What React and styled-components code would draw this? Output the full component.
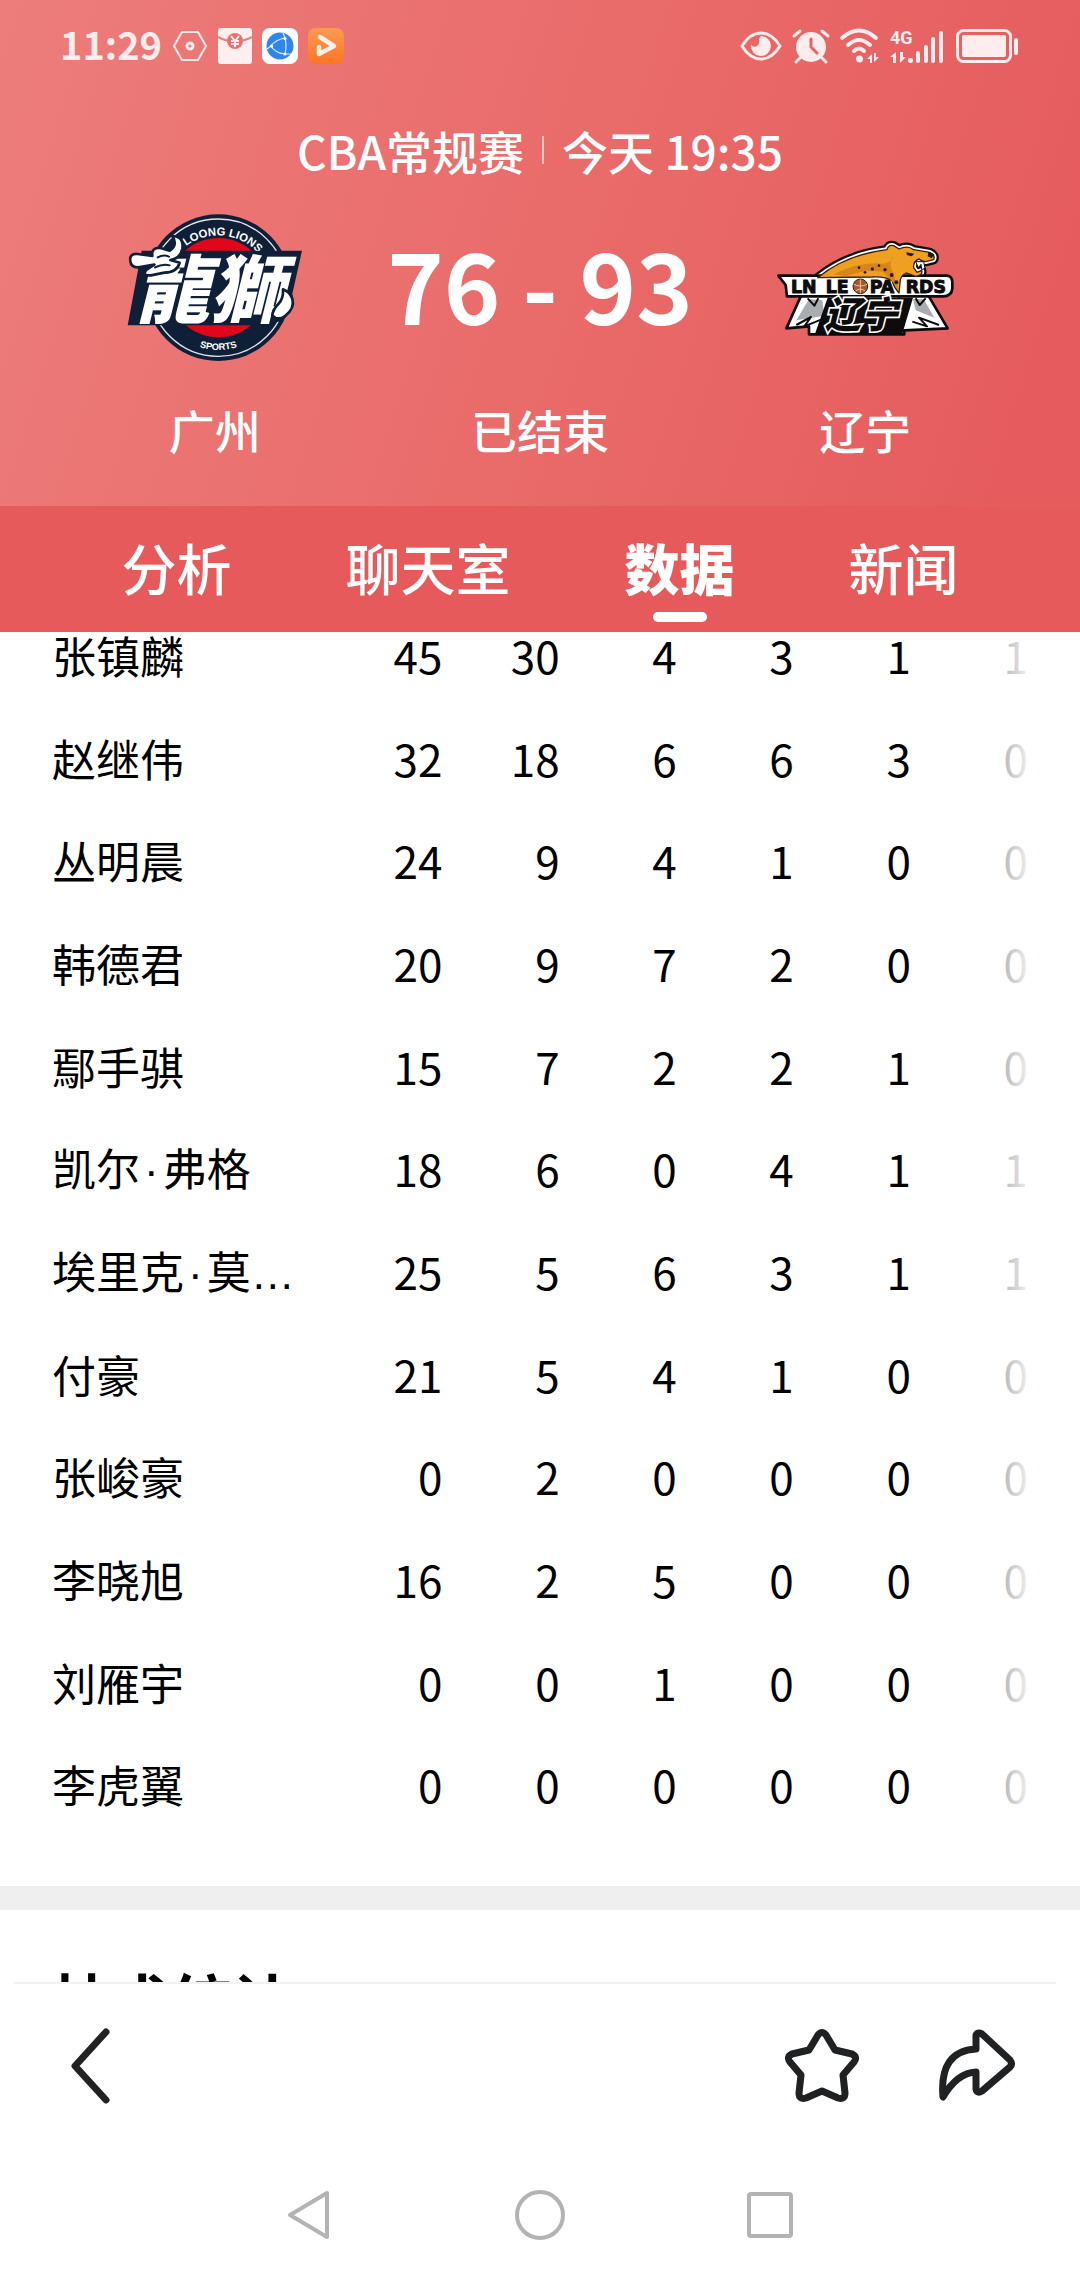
import React from "react";
import styled, { createGlobalStyle } from "styled-components";

const GlobalStyle = createGlobalStyle`
  * {
    box-sizing: border-box;
  }

  body {
    margin: 0;
    background: #fff;
    color: #000;
    font-family: "Noto Sans CJK SC", sans-serif;
  }

  button {
    border: 0;
    padding: 0;
    background: none;
    color: inherit;
    font: inherit;
    cursor: pointer;
  }

  svg {
    display: block;
    flex: none;
    overflow: visible;
  }
`;

const Page = styled.div`
  height: 100vh;
  display: flex;
  flex-direction: column;
`;

const Hero = styled.header`
  padding-bottom: 45px;
  color: #fff;
  background: linear-gradient(108deg, #ec7d7b 0%, #e96b6a 52%, #e65b5d 96%);
`;

const StatusBar = styled.div`
  display: flex;
  align-items: center;
  justify-content: space-between;
  height: 92px;
  padding: 0 60px;
  color: #ffecec;
`;

const StatusGroup = styled.div`
  display: flex;
  align-items: center;
  gap: 10px;
`;

const Clock = styled.time`
  font-size: 38px;
  font-weight: 700;
  line-height: 86px;
  height: 90px;
`;

const MatchTitle = styled.h1`
  display: flex;
  align-items: center;
  justify-content: center;
  gap: 18px;
  margin: 26px 0 30px;
  font-size: 46px;
  font-weight: 500;
  line-height: 64px;
`;

const Divider = styled.span`
  width: 2px;
  height: 28px;
  background: rgba(255, 255, 255, 0.6);
`;

const Scoreboard = styled.div`
  display: grid;
  grid-template-columns: repeat(3, 1fr);
  padding: 0 52px;
`;

const Side = styled.div`
  display: flex;
  flex-direction: column;
  align-items: center;
  gap: 33px;
  font-size: 46px;
  font-weight: 500;
  line-height: 64px;
`;

const Emblem = styled.div`
  display: flex;
  align-items: center;
  height: 152px;
`;

const Score = styled.div`
  height: 152px;
  font-size: 96px;
  font-weight: 700;
  line-height: 144px;
  white-space: nowrap;
`;

const Tabs = styled.nav`
  display: flex;
  justify-content: center;
  gap: 114px;
  background: #e65a5c;
  color: #fff;
`;

const Tab = styled.button`
  display: flex;
  flex-direction: column;
  align-items: center;
  height: 126px;
  padding-top: 20px;
  font-size: 55px;
  line-height: 80px;
  font-weight: ${(props) => (props.$active ? 900 : 500)};

  &::after {
    content: "";
    width: 54px;
    height: 10px;
    margin-top: 6px;
    border-radius: 5px;
    background: ${(props) => (props.$active ? "#fff" : "transparent")};
  }
`;

const Scroller = styled.main`
  position: relative;
  flex: 1;
  min-height: 0;
  overflow: hidden;
`;

const StatsWrap = styled.section`
  position: relative;
  padding: 0 52px 51px;
  margin-top: -29px;
`;

const EdgeFade = styled.div`
  position: absolute;
  top: 0;
  right: 0;
  bottom: 0;
  width: 160px;
  background: linear-gradient(90deg, rgba(255, 255, 255, 0), #fff 72%);
  pointer-events: none;
`;

const StatsTable = styled.table`
  width: 100%;
  table-layout: fixed;
  border-collapse: collapse;
  font-size: 44px;
  line-height: 48px;
`;

const Row = styled.tr`
  height: 103px;

  &:nth-child(3n) {
    height: 102px;
  }
`;

const Player = styled.th`
  padding: 0;
  font-weight: 400;
  text-align: left;
  white-space: nowrap;
`;

/* latin glyphs for the name dot and the ellipsis, the CJK ones are full width */
const Punct = styled.span`
  padding: 0 ${(props) => (props.$spaced ? "4px" : 0)};
  font-family: "Liberation Sans", sans-serif;
  line-height: 1;
`;

const Stat = styled.td`
  width: 12%;
  padding: 0;
  text-align: right;
`;

const TechSection = styled.section`
  padding: 45px 52px;
  border-top: 24px solid #efefef;
`;

const SectionTitle = styled.h2`
  margin: 0;
  font-size: 60px;
  font-weight: 700;
  line-height: 88px;
`;

const ActionBar = styled.footer`
  display: flex;
  align-items: center;
  gap: 70px;
  margin: 0 24px 0 14px;
  padding: 40px 38px 41px 34px;
  border-top: 2px solid #f2f2f2;
`;

const IconButton = styled.button`
  display: flex;
  align-items: center;
  justify-content: center;
  width: 84px;
  height: 84px;
  margin-right: ${(props) => (props.$push ? "auto" : 0)};
`;

const SystemNav = styled.nav`
  display: flex;
  justify-content: center;
  height: 131px;
`;

const NavButton = styled.button`
  display: flex;
  align-items: center;
  justify-content: center;
  width: 230px;
`;

const players = [
  ["张镇麟", 45, 30, 4, 3, 1, 1],
  ["赵继伟", 32, 18, 6, 6, 3, 0],
  ["丛明晨", 24, 9, 4, 1, 0, 0],
  ["韩德君", 20, 9, 7, 2, 0, 0],
  ["鄢手骐", 15, 7, 2, 2, 1, 0],
  ["凯尔·弗格", 18, 6, 0, 4, 1, 1],
  ["埃里克·莫…", 25, 5, 6, 3, 1, 1],
  ["付豪", 21, 5, 4, 1, 0, 0],
  ["张峻豪", 0, 2, 0, 0, 0, 0],
  ["李晓旭", 16, 2, 5, 0, 0, 0],
  ["刘雁宇", 0, 0, 1, 0, 0, 0],
  ["李虎翼", 0, 0, 0, 0, 0, 0],
];

const tabs = ["分析", "聊天室", "数据", "新闻"];

const PlayerName = ({ name }) =>
  name.split(/([·…])/).map((part, i) =>
    part === "·" || part === "…" ? (
      <Punct key={i} $spaced={part === "·"}>
        {part}
      </Punct>
    ) : (
      part
    )
  );

const NotificationIcons = () => (
  <>
    <svg width="36" height="36" viewBox="0 0 36 36" fill="none" stroke="currentColor">
      <path d="M10 4h16l8 14-8 14H10L2 18z" strokeWidth="2" strokeLinejoin="round" />
      <circle cx="18" cy="18" r="3" strokeWidth="3" />
    </svg>
    <svg width="34" height="36" viewBox="0 0 34 36">
      <rect width="34" height="36" rx="3" fill="#fff0ef" />
      <path d="M0 9q17 9 34 0" fill="none" stroke="#e9807f" strokeWidth="2" />
      <circle cx="17" cy="13" r="8" fill="#e9706f" />
      <path
        d="M13 8l4 5 4-5M17 13v6M13 13h8M13 16h8"
        fill="none"
        stroke="#fff0ef"
        strokeWidth="2"
      />
    </svg>
    <svg width="36" height="36" viewBox="0 0 36 36">
      <rect width="36" height="36" rx="8" fill="#fff" />
      <circle cx="18" cy="18" r="13.5" fill="#2f86ea" />
      <g fill="none" stroke="#d7e8fc" strokeWidth="1.2">
        <path d="M9 18Q13 12 23 10M23 10Q25 18 23 26M23 26Q13 25 9 18" />
        <path d="M5 21L9 18M23 10l-2-5M23 26l6 0" />
      </g>
      <g fill="#fff">
        <circle cx="9.500" cy="18" r="1.6" />
        <circle cx="23" cy="10.500" r="1.6" />
        <circle cx="23" cy="26" r="1.6" />
      </g>
    </svg>
    <svg width="36" height="36" viewBox="0 0 36 36">
      <defs>
        <linearGradient id="play" x1="0" y1="0" x2="0" y2="1">
          <stop offset="0" stopColor="#fb9a55" />
          <stop offset="1" stopColor="#fb7624" />
        </linearGradient>
      </defs>
      <rect width="36" height="36" rx="8" fill="url(#play)" />
      <path
        d="M12 9L26 18L11 26V19"
        fill="none"
        stroke="#fff1e6"
        strokeWidth="4.500"
        strokeLinejoin="round"
        strokeLinecap="round"
      />
    </svg>
  </>
);

const DeviceIcons = () => (
  <>
    <svg width="42" height="30" viewBox="0 0 42 30">
      <path
        d="M2 15Q10 2 21 2T40 15Q32 28 21 28T2 15z"
        fill="none"
        stroke="currentColor"
        strokeWidth="3"
      />
      <path
        d="M21 5a10 10 0 1 1-10 9q3 3 6 1t2-6q0-2 2-4z"
        fill="currentColor"
      />
    </svg>
    <svg width="38" height="36" viewBox="0 0 38 36">
      <circle cx="19" cy="19" r="15" fill="currentColor" />
      <path d="M19 11v8l6 6" fill="none" stroke="#e86565" strokeWidth="3" strokeLinecap="round" />
      <path
        d="M2 8l6-5M36 8l-6-5M8 30l-4 4M30 30l4 4"
        stroke="currentColor"
        strokeWidth="3"
        strokeLinecap="round"
      />
    </svg>
    <svg width="40" height="36" viewBox="0 0 40 36">
      <g fill="none" stroke="currentColor" strokeWidth="4" strokeLinecap="round">
        <path d="M2 10Q19 -5 36 10" />
        <path d="M8 17Q19 7 30 17" />
        <path d="M14 23Q19 18 24 23" />
      </g>
      <circle cx="19.500" cy="31" r="3.500" fill="currentColor" />
      <path d="M27 31l5-5v9h-2v-4zM39 29l-5 5v-9h2v4z" fill="currentColor" />
    </svg>
    <svg width="56" height="36" viewBox="0 0 56 36" fill="currentColor">
      <text x="0" y="16" fontFamily="Roboto" fontSize="18" fontWeight="700">
        4G
      </text>
      <path d="M0 29l6-5v11H3v-6zM16 29l-6 6V24h3v5z" />
      <rect x="18" y="30" width="5" height="5" rx="2" />
      <rect x="26" y="23" width="4" height="12" rx="2" />
      <rect x="34" y="17" width="4" height="18" rx="2" />
      <rect x="41" y="9" width="4" height="26" rx="2" />
      <rect x="49" y="3" width="4" height="32" rx="2" />
    </svg>
    <svg width="64" height="36" viewBox="0 0 64 36">
      <rect
        x="1.500"
        y="2.500"
        width="53"
        height="31"
        rx="6"
        fill="none"
        stroke="currentColor"
        strokeWidth="3"
      />
      <rect x="6" y="7" width="44" height="22" rx="2" fill="currentColor" />
      <rect x="58" y="10" width="4" height="17" rx="2" fill="currentColor" />
    </svg>
  </>
);

const LoongLionsLogo = () => (
  <svg width="180" height="152" viewBox="72 40 540 456" role="img" aria-label="Loong Lions">
    <defs>
      <path id="ringTop" d="M192 270a160 160 0 0 1 320 0" />
      <path id="ringBottom" d="M172 270a180 184 0 0 0 360 0" />
    </defs>
    <circle cx="352" cy="267" r="220" fill="#101f38" />
    <circle cx="352" cy="267" r="206" fill="none" stroke="#dfe4ee" strokeWidth="4" />
    <circle cx="352" cy="267" r="149" fill="#e2061a" />
    <g fill="#fff" fontFamily="Liberation Sans" fontWeight="700" textAnchor="middle">
      <text fontSize="34">
        <textPath href="#ringTop" startOffset="53%">
          LOONG LIONS
        </textPath>
      </text>
      <text fontSize="28">
        <textPath href="#ringBottom" startOffset="50%">
          SPORTS
        </textPath>
      </text>
    </g>
    <path d="M122 156H603L574 285Q586 335 540 368L480 380H80z" fill="#101f38" />
    <text
      x="104"
      y="354"
      fill="#fff"
      fontFamily="Noto Sans CJK TC"
      fontSize="222"
      fontWeight="900"
      fontStyle="italic"
    >
      龍獅
    </text>
    <g fill="#fff" stroke="#101f38" strokeWidth="8" strokeLinejoin="round">
      <path d="M88 188Q84 164 110 166L154 172Q150 146 178 148L206 156Q232 140 214 112Q250 114 244 150Q238 180 208 184L236 192Q228 222 190 222L150 230Q122 232 136 214L160 198L112 206Q90 206 88 188z" />
      <path d="M546 272Q548 300 532 316T514 350Q530 368 552 352Q582 330 574 300Q566 280 546 272z" />
    </g>
    <path
      d="M170 176q18-10 34-2M162 206q24-12 44-6"
      fill="none"
      stroke="#101f38"
      strokeWidth="6"
      strokeLinecap="round"
    />
  </svg>
);

const body =
  "M176 176Q262 106 384 92Q388 76 404 80L420 90Q446 78 464 92L512 100Q530 108 524 122L500 128Q488 128 480 120Q462 126 464 146L474 160L488 154Q492 170 470 172L442 162Q428 168 424 182L420 222Q404 204 400 186Q380 172 340 174z";

const LeopardsLogo = () => (
  <svg width="180" height="98" viewBox="48 60 540 294" role="img" aria-label="LN Leopards">
    <g strokeLinejoin="round">
      <path d="M128 226L82 328L150 322V346H436V334L566 328L506 226z" fill="#fff" stroke="#0d0b0c" strokeWidth="8" />
      <path d="M150 240L112 304L196 290L190 244zM462 240L470 274L526 296L494 240z" fill="#a9acb0" />
      <path
        d="M112 318l44-24-20 28 50-20M540 318l-60-22 24 26-44-14M146 238l20 22 12-22M500 238l-18 20-12-20"
        fill="none"
        stroke="#0d0b0c"
        strokeWidth="6"
      />
      <path d={body} fill="#0d0b0c" stroke="#0d0b0c" strokeWidth="28" />
      <path d={body} fill="#fff" stroke="#fff" strokeWidth="14" />
      <path d="M58 170H564Q580 172 580 190V208Q578 232 552 232H84L80 198z" fill="#fff" stroke="#0d0b0c" strokeWidth="8" />
      <path d={body} fill="#f0a021" stroke="#3a200b" strokeWidth="4" />
      <path d="M224 166Q300 126 372 134Q404 128 400 110Q390 138 400 156L420 216Q398 180 370 158Q320 150 262 172z" fill="#d8861a" />
    </g>
    <g fill="#2a1608">
      <circle cx="340" cy="150" r="5" />
      <circle cx="360" cy="140" r="4" />
      <circle cx="378" cy="152" r="5" />
      <circle cx="318" cy="160" r="4" />
      <circle cx="398" cy="168" r="6" />
      <circle cx="300" cy="146" r="4" />
      <circle cx="412" cy="190" r="6" />
      <path d="M442 100l24 4-8 8-14-4zM508 98l18 8-8 12-12-6z" />
    </g>
    <path d="M470 128l8 18 8-10 2 16 10-4-4-20z" fill="#fff" stroke="#0d0b0c" strokeWidth="3" />
    <g
      fill="#0d0b0c"
      stroke="#0d0b0c"
      strokeWidth="3"
      fontFamily="DejaVu Sans"
      fontWeight="700"
      fontSize="52"
    >
      <text x="96" y="221">LN</text>
      <text x="200" y="221">LE</text>
      <text x="332" y="221">PA</text>
      <text x="440" y="221">RDS</text>
    </g>
    <circle cx="304" cy="202" r="22" fill="#a8582b" stroke="#3a1a0c" strokeWidth="3" />
    <path d="M284 196q20 10 40 0M304 181v42M290 216q14-12 28 0" fill="none" stroke="#e8c7a0" strokeWidth="3" />
    <path d="M206 236H462L430 344H168z" fill="#0d0b0c" />
    <text
      x="196"
      y="328"
      fill="#0d0b0c"
      stroke="#fff"
      strokeWidth="10"
      paintOrder="stroke"
      fontFamily="Noto Sans CJK SC"
      fontWeight="900"
      fontStyle="italic"
      fontSize="110"
    >
      辽宁
    </text>
  </svg>
);

const BackIcon = () => (
  <svg width="40" height="76" viewBox="0 0 40 76" fill="none" stroke="#222" strokeWidth="7">
    <path d="M36 4L5 38L36 72" strokeLinecap="round" strokeLinejoin="round" />
  </svg>
);

const StarIcon = () => (
  <svg width="74" height="74" viewBox="0 0 74 74" fill="none" stroke="#1f2122" strokeWidth="7">
    <path
      d="M33 6Q37 1 41 6L50 21L67 25Q73 28 69 33L58 46L60 64Q60 71 53 69L37 62L21 69Q14 71 14 64L16 46L5 33Q1 28 7 25L24 21z"
      strokeLinejoin="round"
    />
  </svg>
);

const ShareIcon = () => (
  <svg width="76" height="74" viewBox="0 0 76 74" fill="none" stroke="#1f2122" strokeWidth="7">
    <path
      d="M38 6Q40 3 44 5L72 31Q75 35 72 38L44 62Q39 65 38 60V43Q19 44 5 68Q1 22 38 20z"
      strokeLinejoin="round"
    />
  </svg>
);

const App = () => {
  return (
    <>
      <GlobalStyle />
      <Page lang="zh-CN">
        <Hero>
          <StatusBar>
            <StatusGroup>
              <Clock>11:29</Clock>
              <NotificationIcons />
            </StatusGroup>
            <StatusGroup>
              <DeviceIcons />
            </StatusGroup>
          </StatusBar>
          <MatchTitle>
            <span>CBA常规赛</span>
            <Divider />
            <span>今天 19:35</span>
          </MatchTitle>
          <Scoreboard>
            <Side>
              <Emblem>
                <LoongLionsLogo />
              </Emblem>
              <span>广州</span>
            </Side>
            <Side>
              <Score>76 - 93</Score>
              <span>已结束</span>
            </Side>
            <Side>
              <Emblem>
                <LeopardsLogo />
              </Emblem>
              <span>辽宁</span>
            </Side>
          </Scoreboard>
        </Hero>

        <Tabs>
          {tabs.map((tab) => (
            <Tab key={tab} type="button" $active={tab === "数据"}>
              {tab}
            </Tab>
          ))}
        </Tabs>

        <Scroller>
          <StatsWrap>
            <StatsTable>
              <tbody>
                {players.map(([name, ...stats]) => (
                  <Row key={name}>
                    <Player scope="row">
                      <PlayerName name={name} />
                    </Player>
                    {stats.map((value, i) => (
                      <Stat key={i}>{value}</Stat>
                    ))}
                  </Row>
                ))}
              </tbody>
            </StatsTable>
            <EdgeFade />
          </StatsWrap>
          <TechSection>
            <SectionTitle>技术统计</SectionTitle>
          </TechSection>
        </Scroller>

        <ActionBar>
          <IconButton type="button" aria-label="返回" $push>
            <BackIcon />
          </IconButton>
          <IconButton type="button" aria-label="收藏">
            <StarIcon />
          </IconButton>
          <IconButton type="button" aria-label="分享">
            <ShareIcon />
          </IconButton>
        </ActionBar>

        <SystemNav>
          <NavButton type="button" aria-label="Back">
            <svg width="50" height="50" viewBox="0 0 50 50" fill="none" stroke="#b3b3b3" strokeWidth="4">
              <path d="M42 3L5 25L42 47z" strokeLinejoin="round" />
            </svg>
          </NavButton>
          <NavButton type="button" aria-label="Home">
            <svg width="50" height="50" viewBox="0 0 50 50" fill="none" stroke="#b3b3b3" strokeWidth="4">
              <circle cx="25" cy="25" r="23" />
            </svg>
          </NavButton>
          <NavButton type="button" aria-label="Recent apps">
            <svg width="50" height="50" viewBox="0 0 50 50" fill="none" stroke="#b3b3b3" strokeWidth="4">
              <rect x="4" y="4" width="42" height="42" rx="2" />
            </svg>
          </NavButton>
        </SystemNav>
      </Page>
    </>
  );
};

export default App;
